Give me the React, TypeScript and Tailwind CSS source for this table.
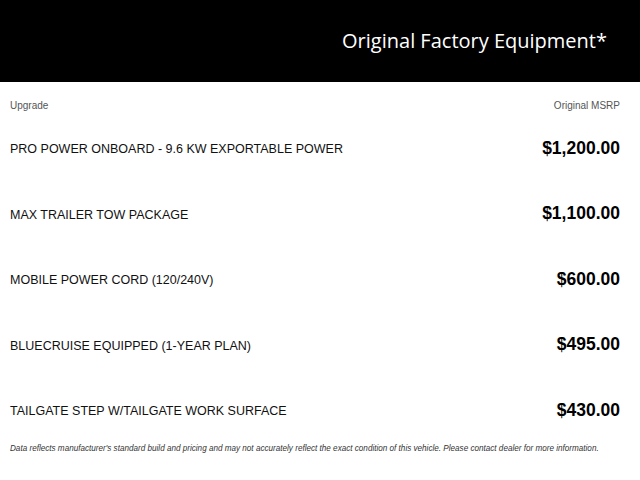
import React from 'react';

const items = [
  { name: 'PRO POWER ONBOARD - 9.6 KW EXPORTABLE POWER', price: '$1,200.00' },
  { name: 'MAX TRAILER TOW PACKAGE', price: '$1,100.00' },
  { name: 'MOBILE POWER CORD (120/240V)', price: '$600.00' },
  { name: 'BLUECRUISE EQUIPPED (1-YEAR PLAN)', price: '$495.00' },
  { name: 'TAILGATE STEP W/TAILGATE WORK SURFACE', price: '$430.00' },
];

export default function App() {
  return (
    <div className="w-[640px] h-[480px] bg-white font-['Liberation_Sans',Arial,sans-serif] overflow-hidden">
      <div className="h-[82px] bg-black flex items-center justify-end pr-[33px]">
        <h1 className="text-white text-[20px] font-['Open_Sans',sans-serif]">
          Original Factory Equipment*
        </h1>
      </div>

      <div className="h-[33px] pt-[18px] pl-[10px] pr-[20px] flex justify-between text-[10px] leading-[12px] text-[#555]">
        <span>Upgrade</span>
        <span>Original MSRP</span>
      </div>

      {items.map((item) => (
        <div key={item.name} className="h-[65.6px] flex items-center justify-between pl-[10px] pr-[20px]">
          <span className="pt-[3px] text-[12.5px] text-[#111]">{item.name}</span>
          <span className="text-[17.5px] font-bold text-black">{item.price}</span>
        </div>
      ))}

      <p className="pl-[10px] pt-[1px] text-[8.15px] leading-[10px] italic text-[#333]">
        Data reflects manufacturer's standard build and pricing and may not accurately reflect the exact condition of this vehicle. Please contact dealer for more information.
      </p>
    </div>
  );
}
